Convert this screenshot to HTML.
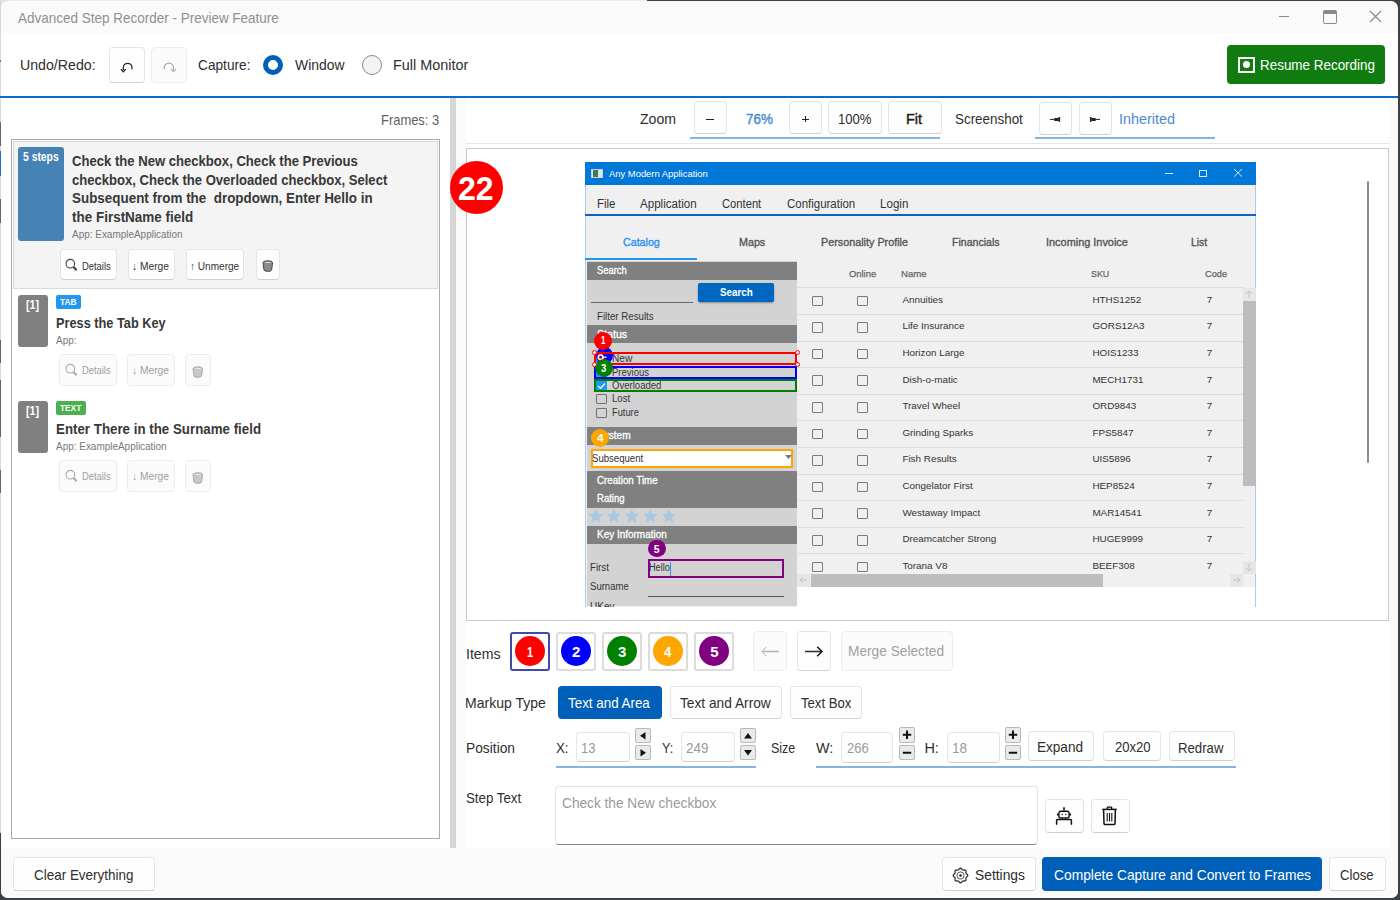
<!DOCTYPE html>
<html><head><meta charset="utf-8">
<style>
*{box-sizing:border-box;margin:0;padding:0}
html,body{width:1400px;height:900px;overflow:hidden}
body{position:relative;background:#e8e8e8;font-family:"Liberation Sans",sans-serif;color:#2e2e2e}
.a{position:absolute}
.t{position:absolute;white-space:nowrap;line-height:1}
.btn{position:absolute;background:#fefefe;border:1px solid #e5e5e5;border-bottom-color:#d0d0d0;border-radius:4px}
.dis{background:#fbfbfb;border-color:#ededed;border-bottom-color:#ededed}
svg{overflow:visible}
</style></head><body>
<div class="a" style="left:0px;top:0px;width:1400px;height:900px;background:#3a4045"></div>
<div class="a" style="left:0px;top:0px;width:647px;height:1px;background:#ececec"></div>
<div class="a" style="left:0px;top:0px;width:10px;height:10px;background:#e4e4e4"></div>
<div class="a" style="left:0px;top:0px;width:1px;height:833px;background:#d9d9d9"></div>
<div class="a" style="left:0px;top:60px;width:1px;height:2px;background:#2a7ad0"></div>
<div class="a" style="left:0px;top:96px;width:1px;height:2px;background:#8a6a50"></div>
<div class="a" style="left:0px;top:122px;width:1px;height:24px;background:#666"></div>
<div class="a" style="left:0px;top:151px;width:1px;height:25px;background:#1e6fd0"></div>
<div class="a" style="left:0px;top:199px;width:1px;height:24px;background:#666"></div>
<div class="a" style="left:0px;top:340px;width:1px;height:23px;background:#666"></div>
<div class="a" style="left:0px;top:380px;width:1px;height:57px;background:#666"></div>
<div class="a" style="left:0px;top:470px;width:1px;height:23px;background:#666"></div>
<div class="a" style="left:1px;top:1px;width:1397px;height:897px;background:#fafafa;border-radius:7px;overflow:hidden"><div class="a" style="left:0;top:32px;width:1397px;height:815px;background:#ffffff"></div></div>
<div class="t" style="left:17.50px;top:11px;font-size:14.1px;color:#909090;transform:scaleX(0.9568);transform-origin:0 0">Advanced Step Recorder - Preview Feature</div>
<div class="a" style="left:1279px;top:16px;width:10px;height:1px;background:#8a8a8a"></div>
<div class="a" style="left:1323px;top:10px;width:14px;height:14px;border:1.5px solid #8a8a8a;border-top-width:4px;border-radius:2px"></div>
<svg class="a" style="left:1369px;top:10px" width="13" height="13"><path d="M1 1L12 12M12 1L1 12" stroke="#8a8a8a" stroke-width="1.2"/></svg>
<div class="t" style="left:20.42px;top:58px;font-size:14.5px;transform:scaleX(0.9767);transform-origin:0 0">Undo/Redo:</div>
<div class="btn" style="left:109px;top:47px;width:36px;height:36px;"></div>
<svg class="a" style="left:118px;top:60px" width="18" height="14"><path d="M5.3 10V7.65A4.35 4.35 0 0 1 14 7.65V9.2" fill="none" stroke="#2a2a2a" stroke-width="1.3"/><path d="M2.9 9.2L5.3 11.7L7.7 9.2" fill="none" stroke="#2a2a2a" stroke-width="1.3"/></svg>
<div class="btn dis" style="left:151px;top:47px;width:36px;height:36px;"></div>
<svg class="a" style="left:160px;top:60px" width="18" height="14"><path d="M4.25 9.2V7.65A4.6 4.6 0 0 1 13.45 7.65V10" fill="none" stroke="#a8a8a8" stroke-width="1.2"/><path d="M11.05 9.2L13.45 11.7L15.85 9.2" fill="none" stroke="#a8a8a8" stroke-width="1.2"/></svg>
<div class="t" style="left:197.50px;top:58px;font-size:14.5px;transform:scaleX(0.9435);transform-origin:0 0">Capture:</div>
<div class="a" style="left:263px;top:55px;width:20px;height:20px;border-radius:50%;border:5px solid #005fb8;background:#fff"></div>
<div class="t" style="left:294.60px;top:58px;font-size:14.5px;transform:scaleX(0.9597);transform-origin:0 0">Window</div>
<div class="a" style="left:362px;top:55px;width:20px;height:20px;border-radius:50%;border:1px solid #8a8a8a;background:#f3f3f3"></div>
<div class="t" style="left:392.61px;top:58px;font-size:14.5px;transform:scaleX(0.9945);transform-origin:0 0">Full Monitor</div>
<div class="a" style="left:1227px;top:45px;width:158px;height:39px;background:#107c10;border-radius:4px"></div>
<div class="a" style="left:1238px;top:57px;width:17px;height:16px;border:2px solid #fff"></div>
<div class="a" style="left:1243px;top:61px;width:7px;height:7px;border-radius:50%;background:#fff"></div>
<div class="t" style="left:1259.57px;top:58px;font-size:14.5px;color:#fff;transform:scaleX(0.9265);transform-origin:0 0">Resume Recording</div>
<div class="a" style="left:0px;top:96px;width:1398px;height:2px;background:#0a6cc7"></div>
<div class="t" style="left:381.31px;top:113px;font-size:14.5px;color:#5f5f5f;transform:scaleX(0.8910);transform-origin:0 0">Frames: 3</div>
<div class="a" style="left:11px;top:139px;width:429px;height:700px;border:1px solid #a8a9b2;background:#fff"></div>
<div class="a" style="left:13px;top:141px;width:425px;height:148px;border:1px solid #dadada;background:#f4f4f4"></div>
<div class="a" style="left:18px;top:147px;width:46px;height:94px;background:#4682b4;border-radius:3px"></div>
<div class="t" style="left:23.10px;top:151px;font-size:12px;color:#fff;font-weight:bold;transform:scaleX(0.8637);transform-origin:0 0">5 steps</div>
<div class="t" style="left:72.30px;top:154px;font-size:14.2px;color:#383838;font-weight:bold;transform:scaleX(0.9226);transform-origin:0 0">Check the New checkbox, Check the Previous</div>
<div class="t" style="left:72.30px;top:173px;font-size:14.2px;color:#383838;font-weight:bold;transform:scaleX(0.9212);transform-origin:0 0">checkbox, Check the Overloaded checkbox, Select</div>
<div class="t" style="left:72.30px;top:191px;font-size:14.2px;color:#383838;font-weight:bold;transform:scaleX(0.9464);transform-origin:0 0">Subsequent from the&nbsp; dropdown, Enter Hello in</div>
<div class="t" style="left:72.30px;top:210px;font-size:14.2px;color:#383838;font-weight:bold;transform:scaleX(0.9492);transform-origin:0 0">the FirstName field</div>
<div class="t" style="left:72.30px;top:230px;font-size:10.2px;color:#777;transform:scaleX(0.9769);transform-origin:0 0">App: ExampleApplication</div>
<div class="btn" style="left:59.5px;top:248.5px;width:57px;height:31px;"></div>
<svg class="a" style="left:65px;top:258px" width="14" height="14"><circle cx="5.3" cy="5.7" r="4.3" fill="none" stroke="#444" stroke-width="1.1"/><path d="M8.6 9L11.6 12.2" stroke="#444" stroke-width="2.2"/></svg>
<div class="t" style="left:81.70px;top:261px;font-size:10.9px;color:#333;transform:scaleX(0.8628);transform-origin:0 0">Details</div>
<div class="btn" style="left:127.5px;top:248.5px;width:47px;height:31px;"></div>
<div class="t" style="left:132.16px;top:261px;font-size:10.9px;color:#333;transform:scaleX(0.9404);transform-origin:0 0">&#8595; Merge</div>
<div class="btn" style="left:185.5px;top:248.5px;width:58.5px;height:31px;"></div>
<div class="t" style="left:189.98px;top:261px;font-size:10.9px;color:#333;transform:scaleX(0.9233);transform-origin:0 0">&#8593; Unmerge</div>
<div class="btn" style="left:255.5px;top:248.5px;width:24.5px;height:31px;"></div>
<svg class="a" style="left:262px;top:259.5px" width="12" height="12"><path d="M1 2.6Q1 0.8 5.8 0.8Q10.6 0.8 10.6 2.6L9.6 10Q9.4 11.3 5.8 11.3Q2.2 11.3 2 10Z" fill="#8a8a8a" stroke="#444" stroke-width="1"/><ellipse cx="5.8" cy="2.4" rx="3.8" ry="1" fill="#f4f4f4" stroke="#444" stroke-width=".6"/></svg>
<div class="a" style="left:18px;top:295px;width:30px;height:52px;background:#808080;border-radius:3px"></div>
<div class="t" style="left:26.30px;top:299px;font-size:12px;color:#fff;font-weight:bold;transform:scaleX(0.8998);transform-origin:0 0">[1]</div>
<div class="a" style="left:56px;top:295px;width:25px;height:14px;background:#2196f3;border-radius:2px"></div>
<div class="t" style="left:60.20px;top:297px;font-size:9.5px;color:#fff;font-weight:bold;transform:scaleX(0.8809);transform-origin:0 0">TAB</div>
<div class="t" style="left:56.20px;top:316px;font-size:14.2px;color:#383838;font-weight:bold;transform:scaleX(0.8995);transform-origin:0 0">Press the Tab Key</div>
<div class="t" style="left:56.20px;top:336px;font-size:10.2px;color:#777;transform:scaleX(0.9788);transform-origin:0 0">App:</div>
<div class="btn dis" style="left:59px;top:354px;width:58px;height:32px;"></div>
<svg class="a" style="left:65px;top:363px" width="14" height="14"><circle cx="5.3" cy="5.7" r="4.3" fill="none" stroke="#aaa" stroke-width="1.1"/><path d="M8.6 9L11.6 12.2" stroke="#aaa" stroke-width="2.2"/></svg>
<div class="t" style="left:81.70px;top:365px;font-size:10.9px;color:#a0a0a0;transform:scaleX(0.8598);transform-origin:0 0">Details</div>
<div class="btn dis" style="left:127px;top:354px;width:48px;height:32px;"></div>
<div class="t" style="left:132.16px;top:365px;font-size:10.9px;color:#a0a0a0;transform:scaleX(0.9404);transform-origin:0 0">&#8595; Merge</div>
<div class="btn dis" style="left:185px;top:354px;width:26px;height:32px;"></div>
<svg class="a" style="left:192px;top:365.5px" width="12" height="12"><path d="M1 2.6Q1 0.8 5.8 0.8Q10.6 0.8 10.6 2.6L9.6 10Q9.4 11.3 5.8 11.3Q2.2 11.3 2 10Z" fill="#c8c8c8" stroke="#aaa" stroke-width="1"/><ellipse cx="5.8" cy="2.4" rx="3.8" ry="1" fill="#f4f4f4" stroke="#aaa" stroke-width=".6"/></svg>
<div class="a" style="left:18px;top:401px;width:30px;height:52px;background:#808080;border-radius:3px"></div>
<div class="t" style="left:26.30px;top:405px;font-size:12px;color:#fff;font-weight:bold;transform:scaleX(0.8998);transform-origin:0 0">[1]</div>
<div class="a" style="left:56px;top:401px;width:30px;height:14px;background:#4caf50;border-radius:2px"></div>
<div class="t" style="left:60.20px;top:403px;font-size:9.5px;color:#fff;font-weight:bold;transform:scaleX(0.8743);transform-origin:0 0">TEXT</div>
<div class="t" style="left:56.20px;top:422px;font-size:14.2px;color:#383838;font-weight:bold;transform:scaleX(0.9389);transform-origin:0 0">Enter There in the Surname field</div>
<div class="t" style="left:56.20px;top:442px;font-size:10.2px;color:#777;transform:scaleX(0.9769);transform-origin:0 0">App: ExampleApplication</div>
<div class="btn dis" style="left:59px;top:460px;width:58px;height:32px;"></div>
<svg class="a" style="left:65px;top:469px" width="14" height="14"><circle cx="5.3" cy="5.7" r="4.3" fill="none" stroke="#aaa" stroke-width="1.1"/><path d="M8.6 9L11.6 12.2" stroke="#aaa" stroke-width="2.2"/></svg>
<div class="t" style="left:81.70px;top:471px;font-size:10.9px;color:#a0a0a0;transform:scaleX(0.8598);transform-origin:0 0">Details</div>
<div class="btn dis" style="left:127px;top:460px;width:48px;height:32px;"></div>
<div class="t" style="left:132.16px;top:471px;font-size:10.9px;color:#a0a0a0;transform:scaleX(0.9404);transform-origin:0 0">&#8595; Merge</div>
<div class="btn dis" style="left:185px;top:460px;width:26px;height:32px;"></div>
<svg class="a" style="left:192px;top:471.5px" width="12" height="12"><path d="M1 2.6Q1 0.8 5.8 0.8Q10.6 0.8 10.6 2.6L9.6 10Q9.4 11.3 5.8 11.3Q2.2 11.3 2 10Z" fill="#c8c8c8" stroke="#aaa" stroke-width="1"/><ellipse cx="5.8" cy="2.4" rx="3.8" ry="1" fill="#f4f4f4" stroke="#aaa" stroke-width=".6"/></svg>
<div class="a" style="left:450px;top:98px;width:6px;height:750px;background:#d6d6d6"></div>
<div class="a" style="left:456px;top:98px;width:10px;height:750px;background:#fafafa"></div>
<div class="a" style="left:1389px;top:99px;width:9px;height:749px;background:#fafafa"></div>
<div class="a" style="left:1px;top:848px;width:1397px;height:50px;background:#fafafa;border-radius:0 0 7px 7px"></div>
<div class="btn" style="left:13px;top:857px;width:142px;height:34px;"></div>
<div class="t" style="left:34.30px;top:868px;font-size:14.5px;transform:scaleX(0.9279);transform-origin:0 0">Clear Everything</div>
<div class="btn" style="left:941.5px;top:857px;width:94.5px;height:34px;"></div>
<svg class="a" style="left:952px;top:866.5px" width="17" height="17"><polygon points="15.75,8.50 15.65,8.97 15.37,9.40 14.97,9.79 14.56,10.12 14.22,10.44 14.00,10.78 13.91,11.17 13.93,11.64 13.99,12.17 13.99,12.72 13.89,13.22 13.63,13.63 13.22,13.89 12.72,13.99 12.17,13.99 11.64,13.93 11.17,13.91 10.78,14.00 10.44,14.22 10.12,14.56 9.79,14.97 9.40,15.37 8.97,15.65 8.50,15.75 8.03,15.65 7.60,15.37 7.21,14.97 6.88,14.56 6.56,14.22 6.22,14.00 5.83,13.91 5.36,13.93 4.83,13.99 4.28,13.99 3.78,13.89 3.37,13.63 3.11,13.22 3.01,12.72 3.01,12.17 3.07,11.64 3.09,11.17 3.00,10.78 2.78,10.44 2.44,10.12 2.03,9.79 1.63,9.40 1.35,8.97 1.25,8.50 1.35,8.03 1.63,7.60 2.03,7.21 2.44,6.88 2.78,6.56 3.00,6.22 3.09,5.83 3.07,5.36 3.01,4.83 3.01,4.28 3.11,3.78 3.37,3.37 3.78,3.11 4.28,3.01 4.83,3.01 5.36,3.07 5.83,3.09 6.22,3.00 6.56,2.78 6.88,2.44 7.21,2.03 7.60,1.63 8.03,1.35 8.50,1.25 8.97,1.35 9.40,1.63 9.79,2.03 10.12,2.44 10.44,2.78 10.78,3.00 11.17,3.09 11.64,3.07 12.17,3.01 12.72,3.01 13.22,3.11 13.63,3.37 13.89,3.78 13.99,4.28 13.99,4.83 13.93,5.36 13.91,5.83 14.00,6.22 14.22,6.56 14.56,6.88 14.97,7.21 15.37,7.60 15.65,8.03" fill="none" stroke="#333" stroke-width="1.3"/><circle cx="8.5" cy="8.5" r="3.6" fill="none" stroke="#444" stroke-width="0.9"/><circle cx="8.5" cy="8.5" r="1.3" fill="#222"/></svg>
<div class="t" style="left:974.60px;top:868px;font-size:14.5px;transform:scaleX(0.9532);transform-origin:0 0">Settings</div>
<div class="a" style="left:1042px;top:857px;width:280px;height:34px;background:#005fb8;border-radius:4px"></div>
<div class="t" style="left:1053.50px;top:868px;font-size:14.5px;color:#fff;transform:scaleX(0.9520);transform-origin:0 0">Complete Capture and Convert to Frames</div>
<div class="btn" style="left:1329px;top:857px;width:57px;height:34px;"></div>
<div class="t" style="left:1340.20px;top:868px;font-size:14.5px;transform:scaleX(0.9079);transform-origin:0 0">Close</div>
<div class="t" style="left:640.00px;top:112px;font-size:14.5px;transform:scaleX(0.9734);transform-origin:0 0">Zoom</div>
<div class="btn" style="left:694px;top:101.3px;width:33px;height:33.2px;"></div>
<div class="a" style="left:706px;top:118.5px;width:7.5px;height:1.3px;background:#222"></div>
<div class="t" style="left:746.00px;top:112px;font-size:14.5px;color:#4a8bd4;-webkit-text-stroke:0.45px currentColor;transform:scaleX(0.9269);transform-origin:0 0">76%</div>
<div class="btn" style="left:789px;top:101.3px;width:33px;height:33.2px;"></div>
<div class="a" style="left:802px;top:118.5px;width:6.5px;height:1.3px;background:#222"></div>
<div class="a" style="left:804.6px;top:115.9px;width:1.3px;height:6.5px;background:#222"></div>
<div class="btn" style="left:828px;top:101.3px;width:54px;height:33.2px;"></div>
<div class="t" style="left:837.70px;top:112px;font-size:14.5px;transform:scaleX(0.9035);transform-origin:0 0">100%</div>
<div class="btn" style="left:888px;top:101.3px;width:54px;height:33.2px;"></div>
<div class="t" style="left:906.31px;top:112px;font-size:14.5px;color:#222;-webkit-text-stroke:0.45px currentColor;transform:scaleX(0.9948);transform-origin:0 0">Fit</div>
<div class="a" style="left:690px;top:137px;width:250px;height:2px;background:#86b3e3"></div>
<div class="t" style="left:955.40px;top:112px;font-size:14.5px;transform:scaleX(0.9247);transform-origin:0 0">Screenshot</div>
<div class="btn" style="left:1038.5px;top:101.5px;width:33px;height:33.5px;"></div>
<svg class="a" style="left:1048px;top:112px" width="14" height="12"><path d="M2 7.4H6.5" stroke="#222" stroke-width="1"/><rect x="6.3" y="6" width="4.3" height="3" fill="#222"/><rect x="10.4" y="5" width="1.7" height="4.8" fill="#222"/></svg>
<div class="btn" style="left:1078.5px;top:101.5px;width:33px;height:33.5px;"></div>
<svg class="a" style="left:1088px;top:112px" width="14" height="12"><rect x="1.9" y="5" width="1.7" height="4.8" fill="#222"/><rect x="3.4" y="6" width="4.3" height="3" fill="#222"/><path d="M7.5 7.4H12" stroke="#222" stroke-width="1"/></svg>
<div class="t" style="left:1119.41px;top:112px;font-size:14.5px;color:#4a8bd4;transform:scaleX(0.9934);transform-origin:0 0">Inherited</div>
<div class="a" style="left:1035px;top:137px;width:180px;height:2px;background:#86b3e3"></div>
<div class="a" style="left:466px;top:143px;width:923px;height:1px;background:#e6e6e6"></div>
<div class="a" style="left:466px;top:148px;width:923px;height:473px;border:1px solid #c9c9c9;background:#fff"></div>
<div class="a" style="left:1367px;top:181px;width:2px;height:282px;background:#8a8a8a;border-radius:1px"></div>
<div class="a" style="left:585px;top:162px;width:671px;height:23.4px;background:#0078d7"></div>
<div class="a" style="left:591px;top:169px;width:12px;height:9px;background:#dfe6ea;border:1px solid #c7d0d6"></div>
<div class="a" style="left:593px;top:170px;width:5px;height:7px;background:#3f7d5a"></div>
<div class="t" style="left:609.40px;top:169px;font-size:9.6px;color:#fff;transform:scaleX(0.9803);transform-origin:0 0">Any Modern Application</div>
<div class="a" style="left:1165px;top:173px;width:8px;height:1px;background:rgba(255,255,255,.85)"></div>
<div class="a" style="left:1199px;top:169.5px;width:8px;height:7.5px;border:1px solid rgba(255,255,255,.85)"></div>
<svg class="a" style="left:1234px;top:169.4px" width="8" height="8"><path d="M0 0L8 7.6M8 0L0 7.6" stroke="rgba(255,255,255,.9)" stroke-width=".9"/></svg>
<div class="a" style="left:585px;top:185px;width:671px;height:422px;background:#f0f0f0;border-left:1px solid #a9cdf0;border-right:1px solid #a9cdf0"></div>
<div class="a" style="left:585px;top:214px;width:671px;height:2px;background:#0a64c8"></div>
<div class="t" style="left:596.68px;top:198px;font-size:12.5px;color:#333;transform:scaleX(0.9172);transform-origin:0 0">File</div>
<div class="t" style="left:640.30px;top:198px;font-size:12.5px;color:#333;transform:scaleX(0.9265);transform-origin:0 0">Application</div>
<div class="t" style="left:722.00px;top:198px;font-size:12.5px;color:#333;transform:scaleX(0.8960);transform-origin:0 0">Content</div>
<div class="t" style="left:786.60px;top:198px;font-size:12.5px;color:#333;transform:scaleX(0.9180);transform-origin:0 0">Configuration</div>
<div class="t" style="left:880.47px;top:198px;font-size:12.5px;color:#333;transform:scaleX(0.9280);transform-origin:0 0">Login</div>
<div class="t" style="left:622.90px;top:237px;font-size:11.2px;color:#2d8ff0;-webkit-text-stroke:0.35px currentColor;transform:scaleX(0.9546);transform-origin:0 0">Catalog</div>
<div class="t" style="left:739.20px;top:237px;font-size:11.2px;color:#555;-webkit-text-stroke:0.35px currentColor;transform:scaleX(0.9581);transform-origin:0 0">Maps</div>
<div class="t" style="left:820.90px;top:237px;font-size:11.2px;color:#555;-webkit-text-stroke:0.35px currentColor;transform:scaleX(0.9651);transform-origin:0 0">Personality Profile</div>
<div class="t" style="left:951.70px;top:237px;font-size:11.2px;color:#555;-webkit-text-stroke:0.35px currentColor;transform:scaleX(0.9454);transform-origin:0 0">Financials</div>
<div class="t" style="left:1046.02px;top:237px;font-size:11.2px;color:#555;-webkit-text-stroke:0.35px currentColor;transform:scaleX(0.9755);transform-origin:0 0">Incoming Invoice</div>
<div class="t" style="left:1190.60px;top:237px;font-size:11.2px;color:#555;-webkit-text-stroke:0.35px currentColor;transform:scaleX(0.9289);transform-origin:0 0">List</div>
<div class="a" style="left:585px;top:258px;width:112px;height:2px;background:#2196f3"></div>
<div class="a" style="left:587px;top:261px;width:210px;height:345px;background:#d3d3d3"></div>
<div class="a" style="left:587px;top:261.6px;width:210px;height:18.19999999999999px;background:#808080"></div>
<div class="t" style="left:597.10px;top:266px;font-size:10.3px;color:#fff;-webkit-text-stroke:0.3px currentColor;transform:scaleX(0.9119);transform-origin:0 0">Search</div>
<div class="a" style="left:591px;top:301.5px;width:102px;height:1px;background:#666"></div>
<div class="a" style="left:698px;top:283px;width:76px;height:19px;background:#0067c0;border-radius:2px;box-shadow:0 1px 2px rgba(0,0,0,.35)"></div>
<div class="t" style="left:719.50px;top:288px;font-size:10.3px;color:#fff;font-weight:bold;transform:scaleX(0.9543);transform-origin:0 0">Search</div>
<div class="t" style="left:597.30px;top:312px;font-size:10px;color:#333;transform:scaleX(0.9701);transform-origin:0 0">Filter Results</div>
<div class="a" style="left:587px;top:325.4px;width:210px;height:17.900000000000034px;background:#808080"></div>
<div class="t" style="left:597.10px;top:330px;font-size:10.3px;color:#fff;-webkit-text-stroke:0.3px currentColor;transform:scaleX(1.0330);transform-origin:0 0">Status</div>
<div class="a" style="left:596px;top:354.2px;width:11px;height:10px;background:#2196f3"></div>
<svg class="a" style="left:597px;top:355.2px" width="9" height="8"><path d="M1 4L3.5 6.5L8 1.5" fill="none" stroke="#fff" stroke-width="1.2"/></svg>
<div class="t" style="left:611.70px;top:354px;font-size:10px;color:#333;transform:scaleX(1.0104);transform-origin:0 0">New</div>
<div class="a" style="left:596px;top:368.2px;width:11px;height:10px;background:#2196f3"></div>
<svg class="a" style="left:597px;top:369.2px" width="9" height="8"><path d="M1 4L3.5 6.5L8 1.5" fill="none" stroke="#fff" stroke-width="1.2"/></svg>
<div class="t" style="left:611.70px;top:368px;font-size:10px;color:#333;transform:scaleX(0.9510);transform-origin:0 0">Previous</div>
<div class="a" style="left:596px;top:381.2px;width:11px;height:10px;background:#2196f3"></div>
<svg class="a" style="left:597px;top:382.2px" width="9" height="8"><path d="M1 4L3.5 6.5L8 1.5" fill="none" stroke="#fff" stroke-width="1.2"/></svg>
<div class="t" style="left:611.70px;top:381px;font-size:10px;color:#333;transform:scaleX(0.9562);transform-origin:0 0">Overloaded</div>
<div class="a" style="left:596px;top:393.9px;width:11px;height:10px;border:1.5px solid #707070;border-radius:1px"></div>
<div class="t" style="left:611.70px;top:394px;font-size:10px;color:#333;transform:scaleX(0.9570);transform-origin:0 0">Lost</div>
<div class="a" style="left:596px;top:407.9px;width:11px;height:10px;border:1.5px solid #707070;border-radius:1px"></div>
<div class="t" style="left:611.70px;top:408px;font-size:10px;color:#333;transform:scaleX(0.9271);transform-origin:0 0">Future</div>
<div class="a" style="left:587px;top:427px;width:210px;height:17.80000000000001px;background:#808080"></div>
<div class="t" style="left:597.10px;top:431px;font-size:10.3px;color:#fff;-webkit-text-stroke:0.3px currentColor;transform:scaleX(0.9777);transform-origin:0 0">System</div>
<div class="a" style="left:590.7px;top:449px;width:202.3px;height:18.5px;background:#fff;border:2px solid #ffa500"></div>
<div class="t" style="left:591.80px;top:454px;font-size:10px;color:#333;transform:scaleX(0.9589);transform-origin:0 0">Subsequent</div>
<svg class="a" style="left:785px;top:455px" width="8" height="5"><path d="M0 0H7L3.5 4Z" fill="#777"/></svg>
<div class="a" style="left:587px;top:471px;width:210px;height:36.69999999999999px;background:#808080"></div>
<div class="t" style="left:597.30px;top:476px;font-size:10.3px;color:#fff;-webkit-text-stroke:0.3px currentColor;transform:scaleX(0.9450);transform-origin:0 0">Creation Time</div>
<div class="t" style="left:597.30px;top:494px;font-size:10.3px;color:#fff;-webkit-text-stroke:0.3px currentColor;transform:scaleX(0.9255);transform-origin:0 0">Rating</div>
<svg class="a" style="left:580px;top:508px" width="100" height="18"><polygon points="15.70,1.20 17.82,5.59 22.64,6.24 19.12,9.61 19.99,14.41 15.70,12.10 11.41,14.41 12.28,9.61 8.76,6.24 13.58,5.59" fill="#a9c9e3"/><polygon points="33.80,1.20 35.92,5.59 40.74,6.24 37.22,9.61 38.09,14.41 33.80,12.10 29.51,14.41 30.38,9.61 26.86,6.24 31.68,5.59" fill="#a9c9e3"/><polygon points="51.90,1.20 54.02,5.59 58.84,6.24 55.32,9.61 56.19,14.41 51.90,12.10 47.61,14.41 48.48,9.61 44.96,6.24 49.78,5.59" fill="#a9c9e3"/><polygon points="70.50,1.20 72.62,5.59 77.44,6.24 73.92,9.61 74.79,14.41 70.50,12.10 66.21,14.41 67.08,9.61 63.56,6.24 68.38,5.59" fill="#a9c9e3"/><polygon points="88.80,1.20 90.92,5.59 95.74,6.24 92.22,9.61 93.09,14.41 88.80,12.10 84.51,14.41 85.38,9.61 81.86,6.24 86.68,5.59" fill="#a9c9e3"/></svg>
<div class="a" style="left:587px;top:526px;width:210px;height:17.5px;background:#808080"></div>
<div class="t" style="left:597.10px;top:530px;font-size:10.3px;color:#fff;-webkit-text-stroke:0.3px currentColor;transform:scaleX(0.9670);transform-origin:0 0">Key Information</div>
<div class="t" style="left:590.00px;top:563px;font-size:10px;color:#333;transform:scaleX(0.9715);transform-origin:0 0">First</div>
<div class="t" style="left:649.00px;top:563px;font-size:10px;color:#333;transform:scaleX(0.9171);transform-origin:0 0">Hello</div>
<div class="a" style="left:670px;top:562px;width:1px;height:14px;background:#2d8ff0"></div>
<div class="t" style="left:590.00px;top:582px;font-size:10px;color:#333;transform:scaleX(0.9558);transform-origin:0 0">Surname</div>
<div class="a" style="left:648px;top:596px;width:136px;height:1px;background:#555"></div>
<div class="a" style="left:587px;top:600px;width:210px;height:6.5px;overflow:hidden"><div class="t" style="left:3px;top:1.5px;font-size:10px;color:#333">UKey</div></div>
<div class="t" style="left:848.50px;top:269px;font-size:9.9px;color:#666;-webkit-text-stroke:0.25px currentColor;transform:scaleX(0.9500);transform-origin:0 0">Online</div>
<div class="t" style="left:900.80px;top:269px;font-size:9.9px;color:#666;-webkit-text-stroke:0.25px currentColor;transform:scaleX(0.9758);transform-origin:0 0">Name</div>
<div class="t" style="left:1091.00px;top:269px;font-size:9.9px;color:#666;-webkit-text-stroke:0.25px currentColor;transform:scaleX(0.8923);transform-origin:0 0">SKU</div>
<div class="t" style="left:1204.90px;top:269px;font-size:9.9px;color:#666;-webkit-text-stroke:0.25px currentColor;transform:scaleX(0.9372);transform-origin:0 0">Code</div>
<div class="a" style="left:798px;top:287.4px;width:445px;height:1px;background:#dadada"></div>
<div class="a" style="left:812px;top:295.7px;width:11px;height:10.5px;border:1.2px solid #7a7a7a;border-radius:1px"></div>
<div class="a" style="left:857px;top:295.7px;width:11px;height:10.5px;border:1.2px solid #7a7a7a;border-radius:1px"></div>
<div class="t" style="left:902.40px;top:295px;font-size:9.9px;color:#333">Annuities</div>
<div class="t" style="left:1092.40px;top:295px;font-size:9.9px;color:#333">HTHS1252</div>
<div class="t" style="left:1206.80px;top:295px;font-size:9.9px;color:#333">7</div>
<div class="a" style="left:798px;top:313.98999999999995px;width:445px;height:1px;background:#dadada"></div>
<div class="a" style="left:812px;top:322.28999999999996px;width:11px;height:10.5px;border:1.2px solid #7a7a7a;border-radius:1px"></div>
<div class="a" style="left:857px;top:322.28999999999996px;width:11px;height:10.5px;border:1.2px solid #7a7a7a;border-radius:1px"></div>
<div class="t" style="left:902.40px;top:321px;font-size:9.9px;color:#333">Life Insurance</div>
<div class="t" style="left:1092.40px;top:321px;font-size:9.9px;color:#333">GORS12A3</div>
<div class="t" style="left:1206.80px;top:321px;font-size:9.9px;color:#333">7</div>
<div class="a" style="left:798px;top:340.58px;width:445px;height:1px;background:#dadada"></div>
<div class="a" style="left:812px;top:348.88px;width:11px;height:10.5px;border:1.2px solid #7a7a7a;border-radius:1px"></div>
<div class="a" style="left:857px;top:348.88px;width:11px;height:10.5px;border:1.2px solid #7a7a7a;border-radius:1px"></div>
<div class="t" style="left:902.40px;top:348px;font-size:9.9px;color:#333">Horizon Large</div>
<div class="t" style="left:1092.40px;top:348px;font-size:9.9px;color:#333">HOIS1233</div>
<div class="t" style="left:1206.80px;top:348px;font-size:9.9px;color:#333">7</div>
<div class="a" style="left:798px;top:367.16999999999996px;width:445px;height:1px;background:#dadada"></div>
<div class="a" style="left:812px;top:375.46999999999997px;width:11px;height:10.5px;border:1.2px solid #7a7a7a;border-radius:1px"></div>
<div class="a" style="left:857px;top:375.46999999999997px;width:11px;height:10.5px;border:1.2px solid #7a7a7a;border-radius:1px"></div>
<div class="t" style="left:902.40px;top:375px;font-size:9.9px;color:#333">Dish-o-matic</div>
<div class="t" style="left:1092.40px;top:375px;font-size:9.9px;color:#333">MECH1731</div>
<div class="t" style="left:1206.80px;top:375px;font-size:9.9px;color:#333">7</div>
<div class="a" style="left:798px;top:393.76px;width:445px;height:1px;background:#dadada"></div>
<div class="a" style="left:812px;top:402.06px;width:11px;height:10.5px;border:1.2px solid #7a7a7a;border-radius:1px"></div>
<div class="a" style="left:857px;top:402.06px;width:11px;height:10.5px;border:1.2px solid #7a7a7a;border-radius:1px"></div>
<div class="t" style="left:902.40px;top:401px;font-size:9.9px;color:#333">Travel Wheel</div>
<div class="t" style="left:1092.40px;top:401px;font-size:9.9px;color:#333">ORD9843</div>
<div class="t" style="left:1206.80px;top:401px;font-size:9.9px;color:#333">7</div>
<div class="a" style="left:798px;top:420.34999999999997px;width:445px;height:1px;background:#dadada"></div>
<div class="a" style="left:812px;top:428.65px;width:11px;height:10.5px;border:1.2px solid #7a7a7a;border-radius:1px"></div>
<div class="a" style="left:857px;top:428.65px;width:11px;height:10.5px;border:1.2px solid #7a7a7a;border-radius:1px"></div>
<div class="t" style="left:902.40px;top:428px;font-size:9.9px;color:#333">Grinding Sparks</div>
<div class="t" style="left:1092.40px;top:428px;font-size:9.9px;color:#333">FPS5847</div>
<div class="t" style="left:1206.80px;top:428px;font-size:9.9px;color:#333">7</div>
<div class="a" style="left:798px;top:446.93999999999994px;width:445px;height:1px;background:#dadada"></div>
<div class="a" style="left:812px;top:455.23999999999995px;width:11px;height:10.5px;border:1.2px solid #7a7a7a;border-radius:1px"></div>
<div class="a" style="left:857px;top:455.23999999999995px;width:11px;height:10.5px;border:1.2px solid #7a7a7a;border-radius:1px"></div>
<div class="t" style="left:902.40px;top:454px;font-size:9.9px;color:#333">Fish Results</div>
<div class="t" style="left:1092.40px;top:454px;font-size:9.9px;color:#333">UIS5896</div>
<div class="t" style="left:1206.80px;top:454px;font-size:9.9px;color:#333">7</div>
<div class="a" style="left:798px;top:473.53px;width:445px;height:1px;background:#dadada"></div>
<div class="a" style="left:812px;top:481.83px;width:11px;height:10.5px;border:1.2px solid #7a7a7a;border-radius:1px"></div>
<div class="a" style="left:857px;top:481.83px;width:11px;height:10.5px;border:1.2px solid #7a7a7a;border-radius:1px"></div>
<div class="t" style="left:902.40px;top:481px;font-size:9.9px;color:#333">Congelator First</div>
<div class="t" style="left:1092.40px;top:481px;font-size:9.9px;color:#333">HEP8524</div>
<div class="t" style="left:1206.80px;top:481px;font-size:9.9px;color:#333">7</div>
<div class="a" style="left:798px;top:500.12px;width:445px;height:1px;background:#dadada"></div>
<div class="a" style="left:812px;top:508.41999999999996px;width:11px;height:10.5px;border:1.2px solid #7a7a7a;border-radius:1px"></div>
<div class="a" style="left:857px;top:508.41999999999996px;width:11px;height:10.5px;border:1.2px solid #7a7a7a;border-radius:1px"></div>
<div class="t" style="left:902.40px;top:508px;font-size:9.9px;color:#333">Westaway Impact</div>
<div class="t" style="left:1092.40px;top:508px;font-size:9.9px;color:#333">MAR14541</div>
<div class="t" style="left:1206.80px;top:508px;font-size:9.9px;color:#333">7</div>
<div class="a" style="left:798px;top:526.71px;width:445px;height:1px;background:#dadada"></div>
<div class="a" style="left:812px;top:535.01px;width:11px;height:10.5px;border:1.2px solid #7a7a7a;border-radius:1px"></div>
<div class="a" style="left:857px;top:535.01px;width:11px;height:10.5px;border:1.2px solid #7a7a7a;border-radius:1px"></div>
<div class="t" style="left:902.40px;top:534px;font-size:9.9px;color:#333">Dreamcatcher Strong</div>
<div class="t" style="left:1092.40px;top:534px;font-size:9.9px;color:#333">HUGE9999</div>
<div class="t" style="left:1206.80px;top:534px;font-size:9.9px;color:#333">7</div>
<div class="a" style="left:798px;top:553.3px;width:445px;height:1px;background:#dadada"></div>
<div class="a" style="left:812px;top:561.5999999999999px;width:11px;height:10.5px;border:1.2px solid #7a7a7a;border-radius:1px"></div>
<div class="a" style="left:857px;top:561.5999999999999px;width:11px;height:10.5px;border:1.2px solid #7a7a7a;border-radius:1px"></div>
<div class="t" style="left:902.40px;top:561px;font-size:9.9px;color:#333">Torana V8</div>
<div class="t" style="left:1092.40px;top:561px;font-size:9.9px;color:#333">BEEF308</div>
<div class="t" style="left:1206.80px;top:561px;font-size:9.9px;color:#333">7</div>
<div class="a" style="left:1243px;top:288px;width:12.5px;height:13px;background:#e6e6e6"></div>
<svg class="a" style="left:1245px;top:290px" width="8" height="9"><path d="M4 8V1M1 4L4 1L7 4" fill="none" stroke="#c4c4c4" stroke-width="1"/></svg>
<div class="a" style="left:1243px;top:301px;width:12.5px;height:185px;background:#bdbdbd"></div>
<div class="a" style="left:1243px;top:561px;width:12.5px;height:13px;background:#e6e6e6"></div>
<svg class="a" style="left:1245px;top:563px" width="8" height="9"><path d="M4 1V8M1 5L4 8L7 5" fill="none" stroke="#c4c4c4" stroke-width="1"/></svg>
<div class="a" style="left:797px;top:574px;width:446px;height:12.8px;background:#f0f0f0"></div>
<div class="a" style="left:797px;top:574px;width:13px;height:12.8px;background:#e6e6e6"></div>
<svg class="a" style="left:799px;top:576px" width="9" height="8"><path d="M8 4H1M4 1L1 4L4 7" fill="none" stroke="#c4c4c4" stroke-width="1"/></svg>
<div class="a" style="left:810.8px;top:574px;width:292px;height:12.8px;background:#bdbdbd"></div>
<div class="a" style="left:1230px;top:574px;width:13px;height:12.8px;background:#e6e6e6"></div>
<svg class="a" style="left:1232px;top:576px" width="9" height="8"><path d="M1 4H8M5 1L8 4L5 7" fill="none" stroke="#c4c4c4" stroke-width="1"/></svg>
<div class="a" style="left:797px;top:586.8px;width:458px;height:20px;background:#fff"></div>
<div class="a" style="left:595.5px;top:347.0px;width:17px;height:17px;border-radius:50%;background:#0000ff"></div>
<svg class="a" style="left:596px;top:353px" width="12" height="9"><circle cx="4.6" cy="4.2" r="2.3" fill="none" stroke="#ff3030" stroke-width="2.6"/><circle cx="4.6" cy="4.2" r="2.3" fill="none" stroke="#fff" stroke-width="1.3"/><path d="M7 4.2H10.5" stroke="#fff" stroke-width="1.3"/></svg>
<div class="a" style="left:594px;top:352px;width:203px;height:12.5px;border:2px solid #ff0000"></div>
<div class="a" style="left:594px;top:365.6px;width:203px;height:13px;border:2px solid #0000ff"></div>
<div class="a" style="left:594px;top:379.4px;width:203px;height:12.2px;border:2px solid #008000"></div>
<div class="a" style="left:648px;top:559.4px;width:136px;height:18.2px;border:2px solid #800080"></div>
<div class="a" style="left:594.5px;top:359.0px;width:18px;height:18px;border-radius:50%;background:#008000"></div>
<div class="t" style="left:600.60px;top:363px;font-size:10.5px;color:#fff;font-weight:bold;transform:scaleX(0.9167);transform-origin:0 0">3</div>
<div class="a" style="left:591.5px;top:350.0px;width:5px;height:5px;border-radius:50%;background:#fff;border:1.2px solid #ff0000"></div>
<div class="a" style="left:794.5px;top:350.0px;width:5px;height:5px;border-radius:50%;background:#fff;border:1.2px solid #ff0000"></div>
<div class="a" style="left:591.5px;top:361.5px;width:5px;height:5px;border-radius:50%;background:#fff;border:1.2px solid #ff0000"></div>
<div class="a" style="left:794.5px;top:361.5px;width:5px;height:5px;border-radius:50%;background:#fff;border:1.2px solid #ff0000"></div>
<div class="a" style="left:594.4px;top:332.0px;width:18px;height:18px;border-radius:50%;background:#ff0000"></div>
<div class="t" style="left:601.10px;top:335px;font-size:10.5px;color:#fff;font-weight:bold;transform:scaleX(0.7500);transform-origin:0 0">1</div>
<div class="a" style="left:590.6px;top:429.0px;width:18px;height:18px;border-radius:50%;background:#ffa500"></div>
<div class="t" style="left:596.50px;top:433px;font-size:10.5px;color:#fff;font-weight:bold;transform:scaleX(1.1333);transform-origin:0 0">4</div>
<div class="a" style="left:648.05px;top:539.55px;width:17.5px;height:17.5px;border-radius:50%;background:#800080"></div>
<div class="t" style="left:653.70px;top:544px;font-size:10.5px;color:#fff;font-weight:bold">5</div>
<div class="a" style="left:450.0px;top:161.0px;width:53px;height:53px;border-radius:50%;background:#ff0000"></div>
<div class="t" style="left:457.93px;top:172px;font-size:33px;color:#fff;font-weight:bold;transform:scaleX(0.9730);transform-origin:0 0">22</div>
<div class="t" style="left:465.73px;top:647px;font-size:14.5px;transform:scaleX(0.9737);transform-origin:0 0">Items</div>
<div class="a" style="left:510.0px;top:631.5px;width:40px;height:39px;border:2px solid #4048a8;border-radius:3px;background:#fff"></div>
<div class="a" style="left:515.0px;top:636.0px;width:30px;height:30px;border-radius:50%;background:#ff0000"></div>
<div class="t" style="left:526.90px;top:644px;font-size:15px;color:#fff;font-weight:bold;transform:scaleX(0.7250);transform-origin:0 0">1</div>
<div class="a" style="left:556.1px;top:631.5px;width:39.5px;height:39px;border:2px solid #dcdcdc;border-radius:3px;background:#fff"></div>
<div class="a" style="left:561.1px;top:636.0px;width:30px;height:30px;border-radius:50%;background:#0000ff"></div>
<div class="t" style="left:571.90px;top:644px;font-size:15px;color:#fff;font-weight:bold">2</div>
<div class="a" style="left:602.2px;top:631.5px;width:39.5px;height:39px;border:2px solid #dcdcdc;border-radius:3px;background:#fff"></div>
<div class="a" style="left:607.2px;top:636.0px;width:30px;height:30px;border-radius:50%;background:#008000"></div>
<div class="t" style="left:618.00px;top:644px;font-size:15px;color:#fff;font-weight:bold">3</div>
<div class="a" style="left:648.3px;top:631.5px;width:39.5px;height:39px;border:2px solid #dcdcdc;border-radius:3px;background:#fff"></div>
<div class="a" style="left:653.3px;top:636.0px;width:30px;height:30px;border-radius:50%;background:#ffa500"></div>
<div class="t" style="left:664.10px;top:644px;font-size:15px;color:#fff;font-weight:bold;transform:scaleX(0.8889);transform-origin:0 0">4</div>
<div class="a" style="left:694.4px;top:631.5px;width:39.5px;height:39px;border:2px solid #dcdcdc;border-radius:3px;background:#fff"></div>
<div class="a" style="left:699.4px;top:636.0px;width:30px;height:30px;border-radius:50%;background:#800080"></div>
<div class="t" style="left:710.20px;top:644px;font-size:15px;color:#fff;font-weight:bold">5</div>
<div class="btn dis" style="left:753px;top:631px;width:34px;height:40px;"></div>
<svg class="a" style="left:761px;top:645.5px" width="18" height="11"><path d="M17.8 5.5H1.5" stroke="#b4b4b4" stroke-width="1.6"/><path d="M5.3 1L1 5.5L5.3 10" fill="none" stroke="#aaa" stroke-width="1"/></svg>
<div class="btn" style="left:797px;top:631px;width:34px;height:40px;"></div>
<svg class="a" style="left:805px;top:645.5px" width="18" height="11"><path d="M0 5.5H16.5" stroke="#333" stroke-width="1.6"/><path d="M12.2 0.8L17 5.5L12.2 10.2" fill="none" stroke="#111" stroke-width="1.4"/></svg>
<div class="btn dis" style="left:841px;top:631px;width:112px;height:40px;"></div>
<div class="t" style="left:848.25px;top:644px;font-size:14.5px;color:#a0a0a0;transform:scaleX(0.9453);transform-origin:0 0">Merge Selected</div>
<div class="t" style="left:465.43px;top:696px;font-size:14.5px;transform:scaleX(0.9668);transform-origin:0 0">Markup Type</div>
<div class="a" style="left:558px;top:686px;width:104px;height:32.5px;background:#005fb8;border-radius:4px"></div>
<div class="t" style="left:568.10px;top:696px;font-size:14.5px;color:#fff;transform:scaleX(0.9225);transform-origin:0 0">Text and Area</div>
<div class="btn" style="left:669.5px;top:686px;width:112.5px;height:32.5px;"></div>
<div class="t" style="left:680.00px;top:696px;font-size:14.5px;transform:scaleX(0.9462);transform-origin:0 0">Text and Arrow</div>
<div class="btn" style="left:789.5px;top:686px;width:72px;height:32.5px;"></div>
<div class="t" style="left:800.60px;top:696px;font-size:14.5px;transform:scaleX(0.9049);transform-origin:0 0">Text Box</div>
<div class="t" style="left:465.65px;top:741px;font-size:14.5px;transform:scaleX(0.9501);transform-origin:0 0">Position</div>
<div class="t" style="left:555.80px;top:741px;font-size:14.5px;transform:scaleX(0.9154);transform-origin:0 0">X:</div>
<div class="btn" style="left:576px;top:731.5px;width:53.5px;height:30.5px;"></div>
<div class="t" style="left:581.40px;top:741px;font-size:14.5px;color:#9a9a9a;transform:scaleX(0.9028);transform-origin:0 0">13</div>
<div class="a" style="left:635px;top:727.5px;width:16px;height:15.5px;background:#eaeaea;border:1px solid #b9b9b9;border-radius:2px"></div>
<div class="a" style="left:635px;top:744.5px;width:16px;height:15.5px;background:#eaeaea;border:1px solid #b9b9b9;border-radius:2px"></div>
<svg class="a" style="left:635px;top:727.5px" width="16" height="15.5"><path d="M5 7.75L10.5 4V11.5Z" fill="#111"/></svg>
<svg class="a" style="left:635px;top:744.5px" width="16" height="15.5"><path d="M11 7.75L5.5 4V11.5Z" fill="#111"/></svg>
<div class="t" style="left:661.50px;top:741px;font-size:14.5px;transform:scaleX(0.8676);transform-origin:0 0">Y:</div>
<div class="btn" style="left:681px;top:731.5px;width:53.5px;height:30.5px;"></div>
<div class="t" style="left:686.40px;top:741px;font-size:14.5px;color:#9a9a9a;transform:scaleX(0.9284);transform-origin:0 0">249</div>
<div class="a" style="left:740px;top:727.5px;width:16px;height:15.5px;background:#eaeaea;border:1px solid #b9b9b9;border-radius:2px"></div>
<div class="a" style="left:740px;top:744.5px;width:16px;height:15.5px;background:#eaeaea;border:1px solid #b9b9b9;border-radius:2px"></div>
<svg class="a" style="left:740px;top:727.5px" width="16" height="15.5"><path d="M8 5L12 10.5H4Z" fill="#111"/></svg>
<svg class="a" style="left:740px;top:744.5px" width="16" height="15.5"><path d="M8 10.5L12 5H4Z" fill="#111"/></svg>
<div class="a" style="left:556px;top:766px;width:200px;height:2px;background:#86b3e3"></div>
<div class="t" style="left:770.80px;top:741px;font-size:14.5px;transform:scaleX(0.8599);transform-origin:0 0">Size</div>
<div class="t" style="left:816.00px;top:741px;font-size:14.5px;transform:scaleX(0.9925);transform-origin:0 0">W:</div>
<div class="btn" style="left:840.5px;top:731.5px;width:52.5px;height:31px;"></div>
<div class="t" style="left:846.80px;top:741px;font-size:14.5px;color:#9a9a9a;transform:scaleX(0.8994);transform-origin:0 0">266</div>
<div class="a" style="left:899px;top:727.2px;width:16px;height:15.5px;background:#eaeaea;border:1px solid #b9b9b9;border-radius:2px"></div>
<div class="a" style="left:899px;top:744.6px;width:16px;height:15.5px;background:#eaeaea;border:1px solid #b9b9b9;border-radius:2px"></div>
<svg class="a" style="left:899px;top:727.2px" width="16" height="15.5"><path d="M8 3.5V12M3.8 7.75H12.2" stroke="#111" stroke-width="2"/></svg>
<svg class="a" style="left:899px;top:744.6px" width="16" height="15.5"><path d="M3.8 7.75H12.2" stroke="#111" stroke-width="2"/></svg>
<div class="t" style="left:924.40px;top:741px;font-size:14.5px">H:</div>
<div class="btn" style="left:946.5px;top:731.5px;width:53px;height:31px;"></div>
<div class="t" style="left:951.76px;top:741px;font-size:14.5px;color:#9a9a9a;transform:scaleX(0.9360);transform-origin:0 0">18</div>
<div class="a" style="left:1005px;top:727.2px;width:16px;height:15.5px;background:#eaeaea;border:1px solid #b9b9b9;border-radius:2px"></div>
<div class="a" style="left:1005px;top:744.6px;width:16px;height:15.5px;background:#eaeaea;border:1px solid #b9b9b9;border-radius:2px"></div>
<svg class="a" style="left:1005px;top:727.2px" width="16" height="15.5"><path d="M8 3.5V12M3.8 7.75H12.2" stroke="#111" stroke-width="2"/></svg>
<svg class="a" style="left:1005px;top:744.6px" width="16" height="15.5"><path d="M3.8 7.75H12.2" stroke="#111" stroke-width="2"/></svg>
<div class="btn" style="left:1027.5px;top:731px;width:66px;height:30px;"></div>
<div class="t" style="left:1037.26px;top:740px;font-size:14.5px;transform:scaleX(0.9353);transform-origin:0 0">Expand</div>
<div class="btn" style="left:1103px;top:731px;width:58px;height:30px;"></div>
<div class="t" style="left:1114.60px;top:740px;font-size:14.5px;transform:scaleX(0.9000);transform-origin:0 0">20x20</div>
<div class="btn" style="left:1168.5px;top:731px;width:66px;height:30px;"></div>
<div class="t" style="left:1178.09px;top:741px;font-size:14.5px;transform:scaleX(0.9092);transform-origin:0 0">Redraw</div>
<div class="a" style="left:816px;top:766px;width:420px;height:2px;background:#86b3e3"></div>
<div class="t" style="left:466.00px;top:791px;font-size:14.5px;transform:scaleX(0.9169);transform-origin:0 0">Step Text</div>
<div class="a" style="left:555px;top:786px;width:483px;height:59px;background:#fff;border:1px solid #e3e3e3;border-bottom:1px solid #8a8a8a;border-radius:4px"></div>
<div class="t" style="left:561.90px;top:796px;font-size:14.5px;color:#9a9a9a;transform:scaleX(0.9431);transform-origin:0 0">Check the New checkbox</div>
<div class="btn" style="left:1044.5px;top:799px;width:39px;height:33.5px;"></div>
<svg class="a" style="left:1054px;top:805px" width="20" height="20"><path d="M10 3V6.2" stroke="#111" stroke-width="1.3"/><path d="M8.7 3.6L10 1.8L11.3 3.6Z" fill="#111"/><rect x="4.9" y="6.3" width="10.2" height="6.6" rx="2" fill="none" stroke="#111" stroke-width="1.4"/><circle cx="3.9" cy="9.6" r="1.1" fill="#111"/><circle cx="16.1" cy="9.6" r="1.1" fill="#111"/><circle cx="8.2" cy="9.5" r=".75" fill="#111"/><circle cx="11.8" cy="9.5" r=".75" fill="#111"/><path d="M8.2 13V15M11.8 13V15" stroke="#111" stroke-width="1.2"/><path d="M2.6 19.8V15.6Q2.6 14.6 3.6 14.6H16.4Q17.4 14.6 17.4 15.6V19.8" fill="none" stroke="#111" stroke-width="1.5"/></svg>
<div class="btn" style="left:1091px;top:799px;width:38.5px;height:33.5px;"></div>
<svg class="a" style="left:1100px;top:805px" width="20" height="20"><path d="M2.3 4.4H16.7" stroke="#111" stroke-width="1.5"/><path d="M7.3 4.2V2.7Q7.3 2.2 7.8 2.2H11.2Q11.7 2.2 11.7 2.7V4.2" fill="none" stroke="#111" stroke-width="1.3"/><path d="M3.6 4.8L4 18.4Q4 19.6 5.2 19.6H13.8Q15 19.6 15 18.4L15.4 4.8" fill="none" stroke="#111" stroke-width="1.5"/><path d="M7.2 8V16.5M9.5 8V16.5M11.8 8V16.5" stroke="#111" stroke-width="1.1"/></svg>
</body></html>
